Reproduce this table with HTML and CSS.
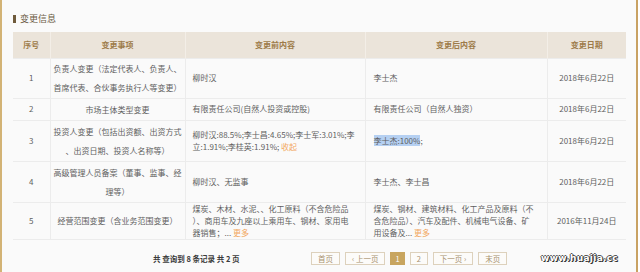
FILE: index.html
```html
<!DOCTYPE html>
<html lang="zh-CN">
<head>
<meta charset="utf-8">
<title>变更信息</title>
<link rel="stylesheet" href="styles.css">
</head>
<body>
<div class="page">
  <div class="panel">
    <h2 class="title"><span class="bar"></span>变更信息</h2>
    <table class="grid">
      <colgroup>
        <col class="c-no"><col class="c-item"><col class="c-before"><col class="c-after"><col class="c-date">
      </colgroup>
      <thead>
        <tr class="r-head">
          <th>序号</th><th>变更事项</th><th>变更前内容</th><th>变更后内容</th><th>变更日期</th>
        </tr>
      </thead>
      <tbody>
        <tr class="r1">
          <td class="no">1</td>
          <td class="item">负责人变更（法定代表人、负责人、<br>首席代表、合伙事务执行人等变更）</td>
          <td class="before">柳时汉</td>
          <td class="after">李士杰</td>
          <td class="date">2018年6月22日</td>
        </tr>
        <tr class="r2">
          <td class="no">2</td>
          <td class="item">市场主体类型变更</td>
          <td class="before">有限责任公司(自然人投资或控股)</td>
          <td class="after">有限责任公司（自然人独资）</td>
          <td class="date">2018年6月22日</td>
        </tr>
        <tr class="r3">
          <td class="no">3</td>
          <td class="item">投资人变更（包括出资额、出资方式<br>、出资日期、投资人名称等）</td>
          <td class="before">柳时汉:88.5%;李士昌:4.65%;李士军:3.01%;李<br>立:1.91%;李桂英:1.91%; <span class="link">收起</span></td>
          <td class="after"><span class="sel">李士杰:100%</span>;</td>
          <td class="date">2018年6月22日</td>
        </tr>
        <tr class="r4">
          <td class="no">4</td>
          <td class="item">高级管理人员备案（董事、监事、经<br>理等）</td>
          <td class="before">柳时汉、无监事</td>
          <td class="after">李士杰、李士昌</td>
          <td class="date">2018年6月22日</td>
        </tr>
        <tr class="r5">
          <td class="no">5</td>
          <td class="item">经营范围变更（含业务范围变更）</td>
          <td class="before">煤炭、木材、水泥、、化工原料（不含危险品<br>）、商用车及九座以上乘用车、钢材、家用电<br>器销售；... <span class="link">更多</span></td>
          <td class="after">煤炭、钢材、建筑材料、化工产品及原料（不<br>含危险品）、汽车及配件、机械电气设备、矿<br>用设备及... <span class="link">更多</span></td>
          <td class="date">2016年11月24日</td>
        </tr>
      </tbody>
    </table>
    <div class="pager">
      <span class="summary">共 查询到 8 条记录 共 2 页</span>
      <div class="pages">
        <a class="btn">首页</a>
        <a class="btn">‹ 上一页</a>
        <a class="btn active">1</a>
        <a class="btn">2</a>
        <a class="btn">下一页 ›</a>
        <a class="btn">末页</a>
      </div>
    </div>
  </div>
  <div class="watermark">www.huajia.cc</div>
</div>
</body>
</html>
```

FILE: styles.css
```css
* { box-sizing: border-box; }
html, body { margin: 0; padding: 0; }
body {
  background: #ffffff;
  font-family: "Noto Sans CJK SC", "Noto Sans", sans-serif;
  color: #5f5f5f;
}
.page {
  position: relative;
  width: 638px;
  height: 272px;
  border-left: 2px solid #d3b375;
  border-right: 2px solid #c9a263;
  background: #fafafa;
  overflow: hidden;
}
.panel {
  padding: 13px 10px 0 11px;
}
.title {
  margin: 0;
  height: 12px;
  display: flex;
  align-items: center;
  font-size: 9px;
  line-height: 12px;
  font-weight: normal;
  color: #6a5a43;
}
.bar {
  width: 3px;
  height: 8px;
  background: #6f5a3b;
  margin-right: 4px;
}
.grid {
  margin-top: 7px;
  width: 613px;
  border-collapse: collapse;
  table-layout: fixed;
  font-size: 8px;
}
.c-no { width: 37px; }
.c-item { width: 135px; }
.c-before { width: 180px; }
.c-after { width: 182px; }
.c-date { width: 79px; }
.grid th {
  height: 26px;
  padding: 0;
  background: #ebe4da;
  color: #9d7b49;
  font-weight: bold;
  border-left: 1px solid #f3eee7;
  text-align: center;
}
.grid th:first-child { border-left: none; }
.grid td {
  padding: 0;
  border: 1px solid #ececec;
  vertical-align: middle;
  line-height: 12px;
  white-space: nowrap;
  background: #fafafa;
}
.grid td:first-child { border-left: none; }
.grid td:last-child { border-right: none; }
.r1 { height: 40px; }
.r2 { height: 22px; }
.r3 { height: 41px; }
.r4 { height: 41px; }
.r5 { height: 35px; }
.no { text-align: center; }
.item { text-align: center; line-height: 19px !important; }
.before { padding-left: 7px !important; }
.after { padding-left: 8px !important; }
.date { text-align: center; }
.link { color: #f2a862; }
.sel { background: #b5d0f2; }
.pager {
  display: flex;
  align-items: center;
  height: 35px;
  padding-top: 2px;
  padding-left: 140px;
}
.summary {
  font-size: 7.5px;
  font-weight: bold;
  color: #3a3a3a;
  width: 80px;
  white-space: nowrap;
  margin-right: 78px;
}
.pages {
  display: flex;
  gap: 5px;
}
.btn {
  display: block;
  height: 13px;
  line-height: 11px;
  padding: 0 6px;
  border: 1px solid #ddd1bc;
  background: #fcfbf9;
  color: #a8916e;
  font-size: 7.5px;
  white-space: nowrap;
}
.btn.active {
  background: #c8a55f;
  border-color: #c8a55f;
  color: #ffffff;
  padding: 0 4px;
}
.watermark {
  position: absolute;
  right: 18px;
  top: 253px;
  font-family: "DejaVu Sans", sans-serif;
  font-weight: bold;
  font-size: 9px;
  color: #ffffff;
  letter-spacing: 0.3px;
  text-shadow: 1px 1px 0 #333, -1px 0 0 #555, 0 -1px 0 #555, 1px 0 0 #444;
}
```
